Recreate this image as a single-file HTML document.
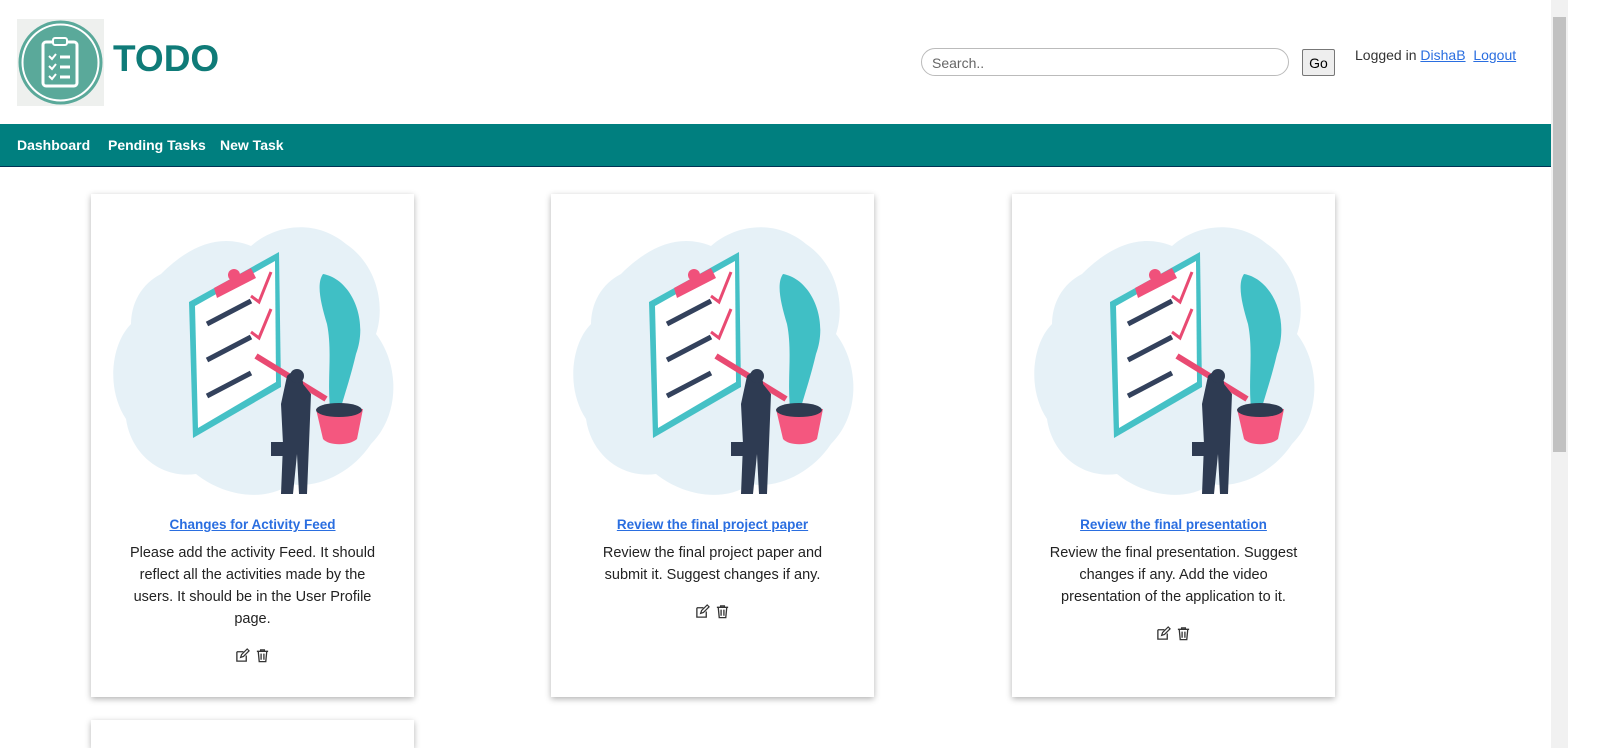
<!DOCTYPE html>
<html style="height:748px;overflow:hidden"><head><meta charset="utf-8"><style>
body{margin:0;width:1600px;height:748px;overflow:hidden;font-family:"Liberation Sans",sans-serif;background:#fff;position:relative}
.logo{position:absolute;left:17px;top:19px;width:87px;height:87px;background:#eef0ee}
.title{position:absolute;left:113px;top:38px;font-size:37px;font-weight:bold;color:#0f7b78}
.search{position:absolute;left:921px;top:48px;width:368px;height:28px;border:1px solid #bbb;border-radius:14px;font-size:14px;color:#666;box-sizing:border-box;padding:6px 10px}
.go{position:absolute;left:1302px;top:49px;width:33px;height:27px;border:1px solid #777;background:#eee;border-radius:2px;font-size:14px;text-align:center;line-height:27px;box-sizing:border-box}
.login{position:absolute;left:1355px;top:47px;font-size:14px;color:#333}
.login a{color:#2a6ee0;text-decoration:underline}
.nav{position:absolute;left:0;top:124px;width:1551px;height:42px;background:#007f7f;border-bottom:1px solid #035}
.nav span{position:absolute;top:13px;color:#fff;font-weight:bold;font-size:14px}
.card{position:absolute;top:194px;width:323px;height:503px;background:#fff;box-shadow:0 2px 6px rgba(0,0,0,.3);text-align:center}
.card svg.il{position:absolute;left:10px;top:10px}
.card .t{position:absolute;top:323px;left:0;right:0;font-size:13.5px;font-weight:bold;color:#2a6ee0;text-decoration:underline}
.card .d{position:absolute;top:348px;left:36px;right:36px;font-size:14.5px;line-height:22px;color:#222}
.ic{display:inline-block;margin-top:18px}
.sb{position:absolute;left:1551px;top:0;width:17px;height:748px;background:#f1f1f1}
.th{position:absolute;left:2px;top:17px;width:13px;height:435px;background:#c1c1c1}
</style></head><body>
<svg width="0" height="0" style="position:absolute"><defs>
<symbol id="il" viewBox="0 0 300 300">
<path d="M60 70 C90 40 120 30 150 42 C175 20 215 15 245 40 C275 60 285 100 275 130 C298 160 300 210 270 240 C250 270 215 285 190 280 C160 300 120 290 95 270 C60 275 30 250 25 215 C5 185 10 140 30 120 C30 100 40 80 60 70Z" fill="#e6f1f7"/>
<polygon points="88,98 178,48 180,183 92,234" fill="#45c1c6"/>
<polygon points="94,102 174,57 175,178 97,224" fill="#fff"/>
<path d="M113 84 L150 64 L155 74 L116 94Z" fill="#f0517b"/>
<circle cx="133" cy="71" r="6" fill="#f0517b"/>
<g stroke="#33415c" stroke-width="5"><line x1="106" y1="120" x2="150" y2="97"/><line x1="106" y1="156" x2="150" y2="133"/><line x1="106" y1="192" x2="150" y2="169"/></g>
<g stroke="#e94a72" stroke-width="3" fill="none"><path d="M150 92 L158 98 L170 68"/><path d="M150 128 L158 134 L170 105"/></g>
<path d="M155 152 L225 195" stroke="#e94a72" stroke-width="6"/>
<path d="M222 70 C250 75 268 115 255 150 C248 180 240 200 238 212 L230 212 C225 180 232 150 226 120 C220 100 215 80 222 70Z" fill="#40bfc5"/>
<path d="M215 205 L262 205 L256 235 C248 242 228 242 222 235Z" fill="#f4577f"/>
<ellipse cx="238" cy="206" rx="23" ry="7" fill="#2e3b50"/>
<path d="M186 172 C192 165 202 168 202 180 L210 190 L208 240 L206 290 L198 290 L196 250 L192 290 L180 290 L182 240 L180 200 Z" fill="#2e3b52"/>
<circle cx="196" cy="172" r="7" fill="#2e3b52"/>
<rect x="170" y="238" width="14" height="14" fill="#2e3b52"/>
</symbol>
<symbol id="ed" viewBox="0 0 16 16"><path d="M2 4h7M2 4v10h10V8" stroke="#333" stroke-width="1.4" fill="none"/><path d="M6 10l1-3 6-6 2 2-6 6z" stroke="#333" stroke-width="1.3" fill="none"/></symbol>
<symbol id="tr" viewBox="0 0 16 16"><path d="M2 3.5h12M6 3.5V2h4v1.5M3.5 4l1 10.5h7l1-10.5M6.5 6v6.5M9.5 6v6.5" stroke="#333" stroke-width="1.4" fill="none"/></symbol>
</defs></svg>
<div class="logo"><svg width="87" height="87" viewBox="0 0 87 87"><circle cx="43.5" cy="43.5" r="42" fill="#5aa99a"/><circle cx="43.5" cy="43.5" r="38" fill="none" stroke="#fff" stroke-width="2"/><rect x="26" y="23" width="34" height="44" rx="3" fill="none" stroke="#fff" stroke-width="3"/><rect x="36" y="19" width="14" height="7" rx="2" fill="#5aa99a" stroke="#fff" stroke-width="2"/><g stroke="#fff" stroke-width="2" fill="none"><path d="M32 37l3 3 4-5M32 47l3 3 4-5M32 57l3 3 4-5"/><path d="M43 38h10M43 48h10M43 58h10" stroke-width="3"/></g></svg></div>
<div class="title">TODO</div>
<div class="search">Search..</div>
<div class="go">Go</div>
<div class="login">Logged in <a>DishaB</a>&nbsp; <a>Logout</a></div>
<div class="nav"><span style="left:17px">Dashboard</span><span style="left:108px">Pending Tasks</span><span style="left:220px">New Task</span></div>

<div class="card" style="left:91px"><svg class="il" width="300" height="300"><use href="#il"/></svg>
<div class="t">Changes for Activity Feed</div>
<div class="d">Please add the activity Feed. It should reflect all the activities made by the users. It should be in the User Profile page.<br><span class="ic"><svg width="15" height="15"><use href="#ed"/></svg> <svg width="15" height="15"><use href="#tr"/></svg></span></div></div>

<div class="card" style="left:551px"><svg class="il" width="300" height="300"><use href="#il"/></svg>
<div class="t">Review the final project paper</div>
<div class="d">Review the final project paper and submit it. Suggest changes if any.<br><span class="ic"><svg width="15" height="15"><use href="#ed"/></svg> <svg width="15" height="15"><use href="#tr"/></svg></span></div></div>

<div class="card" style="left:1012px"><svg class="il" width="300" height="300"><use href="#il"/></svg>
<div class="t">Review the final presentation</div>
<div class="d">Review the final presentation. Suggest changes if any. Add the video presentation of the application to it.<br><span class="ic"><svg width="15" height="15"><use href="#ed"/></svg> <svg width="15" height="15"><use href="#tr"/></svg></span></div></div>

<div class="card" style="left:91px;top:720px;height:28px"></div>
<div class="sb"><div class="th"></div></div>
</body></html>
